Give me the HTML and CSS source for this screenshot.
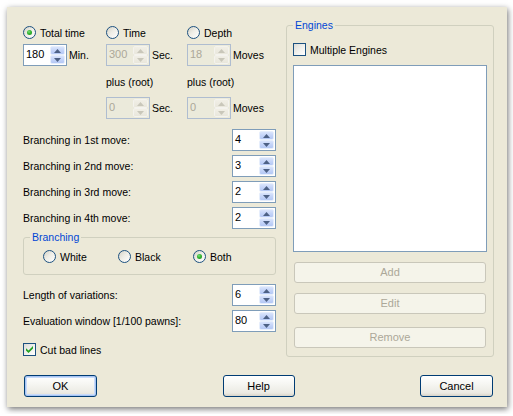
FILE: index.html
```html
<!DOCTYPE html>
<html>
<head>
<meta charset="utf-8">
<title>Options</title>
<link rel="stylesheet" href="styles.css">
</head>
<body>
<div class="window">
  <div class="main">
    <div class="left">
      <div class="trow r1">
        <div class="cell c1"><span class="radio checked"></span><span>Total time</span></div>
        <div class="cell c2"><span class="radio"></span><span>Time</span></div>
        <div class="cell c3"><span class="radio"></span><span>Depth</span></div>
      </div>
      <div class="trow r2">
        <div class="cell c1">
          <div class="spin"><span class="val">180</span><span class="btns"><i class="sb"><svg width="7" height="4" viewBox="0 0 7 4"><path d="M0 4L3.5 0L7 4Z"/></svg></i><i class="sb"><svg width="7" height="4" viewBox="0 0 7 4"><path d="M0 0L3.5 4L7 0Z"/></svg></i></span></div>
          <span class="unit">Min.</span>
        </div>
        <div class="cell c2">
          <div class="spin off"><span class="val">300</span><span class="btns"><i class="sb"><svg width="7" height="4" viewBox="0 0 7 4"><path d="M0 4L3.5 0L7 4Z"/></svg></i><i class="sb"><svg width="7" height="4" viewBox="0 0 7 4"><path d="M0 0L3.5 4L7 0Z"/></svg></i></span></div>
          <span class="unit">Sec.</span>
        </div>
        <div class="cell c3">
          <div class="spin off"><span class="val">18</span><span class="btns"><i class="sb"><svg width="7" height="4" viewBox="0 0 7 4"><path d="M0 4L3.5 0L7 4Z"/></svg></i><i class="sb"><svg width="7" height="4" viewBox="0 0 7 4"><path d="M0 0L3.5 4L7 0Z"/></svg></i></span></div>
          <span class="unit">Moves</span>
        </div>
      </div>
      <div class="trow r3">
        <div class="cell c1"></div>
        <div class="cell c2">plus (root)</div>
        <div class="cell c3">plus (root)</div>
      </div>
      <div class="trow r4">
        <div class="cell c1"></div>
        <div class="cell c2">
          <div class="spin off"><span class="val">0</span><span class="btns"><i class="sb"><svg width="7" height="4" viewBox="0 0 7 4"><path d="M0 4L3.5 0L7 4Z"/></svg></i><i class="sb"><svg width="7" height="4" viewBox="0 0 7 4"><path d="M0 0L3.5 4L7 0Z"/></svg></i></span></div>
          <span class="unit">Sec.</span>
        </div>
        <div class="cell c3">
          <div class="spin off"><span class="val">0</span><span class="btns"><i class="sb"><svg width="7" height="4" viewBox="0 0 7 4"><path d="M0 4L3.5 0L7 4Z"/></svg></i><i class="sb"><svg width="7" height="4" viewBox="0 0 7 4"><path d="M0 0L3.5 4L7 0Z"/></svg></i></span></div>
          <span class="unit">Moves</span>
        </div>
      </div>

      <div class="brow first">
        <span>Branching in 1st move:</span>
        <div class="spin"><span class="val">4</span><span class="btns"><i class="sb"><svg width="7" height="4" viewBox="0 0 7 4"><path d="M0 4L3.5 0L7 4Z"/></svg></i><i class="sb"><svg width="7" height="4" viewBox="0 0 7 4"><path d="M0 0L3.5 4L7 0Z"/></svg></i></span></div>
      </div>
      <div class="brow">
        <span>Branching in 2nd move:</span>
        <div class="spin"><span class="val">3</span><span class="btns"><i class="sb"><svg width="7" height="4" viewBox="0 0 7 4"><path d="M0 4L3.5 0L7 4Z"/></svg></i><i class="sb"><svg width="7" height="4" viewBox="0 0 7 4"><path d="M0 0L3.5 4L7 0Z"/></svg></i></span></div>
      </div>
      <div class="brow">
        <span>Branching in 3rd move:</span>
        <div class="spin"><span class="val">2</span><span class="btns"><i class="sb"><svg width="7" height="4" viewBox="0 0 7 4"><path d="M0 4L3.5 0L7 4Z"/></svg></i><i class="sb"><svg width="7" height="4" viewBox="0 0 7 4"><path d="M0 0L3.5 4L7 0Z"/></svg></i></span></div>
      </div>
      <div class="brow">
        <span>Branching in 4th move:</span>
        <div class="spin"><span class="val">2</span><span class="btns"><i class="sb"><svg width="7" height="4" viewBox="0 0 7 4"><path d="M0 4L3.5 0L7 4Z"/></svg></i><i class="sb"><svg width="7" height="4" viewBox="0 0 7 4"><path d="M0 0L3.5 4L7 0Z"/></svg></i></span></div>
      </div>

      <fieldset class="group branch">
        <legend>Branching</legend>
        <div class="bradios">
          <div class="ropt"><span class="radio"></span><span>White</span></div>
          <div class="ropt"><span class="radio"></span><span>Black</span></div>
          <div class="ropt"><span class="radio checked"></span><span>Both</span></div>
        </div>
      </fieldset>

      <div class="brow len">
        <span>Length of variations:</span>
        <div class="spin"><span class="val">6</span><span class="btns"><i class="sb"><svg width="7" height="4" viewBox="0 0 7 4"><path d="M0 4L3.5 0L7 4Z"/></svg></i><i class="sb"><svg width="7" height="4" viewBox="0 0 7 4"><path d="M0 0L3.5 4L7 0Z"/></svg></i></span></div>
      </div>
      <div class="brow">
        <span>Evaluation window [1/100 pawns]:</span>
        <div class="spin"><span class="val">80</span><span class="btns"><i class="sb"><svg width="7" height="4" viewBox="0 0 7 4"><path d="M0 4L3.5 0L7 4Z"/></svg></i><i class="sb"><svg width="7" height="4" viewBox="0 0 7 4"><path d="M0 0L3.5 4L7 0Z"/></svg></i></span></div>
      </div>

      <div class="crow cut">
        <span class="check"><svg width="7" height="7" viewBox="0 0 7 7"><path d="M0 2.2L2.5 4.6L7 0.1V2.6L2.5 7L0 4.6Z"/></svg></span>
        <span>Cut bad lines</span>
      </div>
    </div>

    <fieldset class="group engines">
      <legend>Engines</legend>
      <div class="crow multi">
        <span class="check empty"></span>
        <span>Multiple Engines</span>
      </div>
      <div class="list"></div>
      <div class="dbtn add">Add</div>
      <div class="dbtn edit">Edit</div>
      <div class="dbtn remove">Remove</div>
    </fieldset>
  </div>

  <div class="buttons">
    <div class="btn default">OK</div>
    <div class="btn help">Help</div>
    <div class="btn">Cancel</div>
  </div>
</div>
</body>
</html>
```

FILE: styles.css
```css
* { box-sizing: border-box; }
html, body { margin: 0; padding: 0; background: #ffffff; }
body {
  font-family: "Liberation Sans", Arial, sans-serif;
  font-size: 10.5px;
  color: #000000;
}

.window {
  margin: 7px;
  width: 500px;
  height: 400px;
  background: #ECE9D8;
  box-shadow: 1px 2px 6px rgba(0, 0, 0, 0.55);
  padding: 12px 13px 0 16px;
}

.main {
  display: flex;
  gap: 10px;
  height: 338px;
}

.left {
  width: 253px;
  display: flex;
  flex-direction: column;
}

/* time grid */
.trow { display: flex; }
.trow .cell { display: flex; align-items: center; white-space: nowrap; }
.c1 { width: 83px; }
.c2 { width: 81px; }
.c3 { flex: 1; }
.r1 { margin-top: 7px; height: 13px; }
.r2 { margin-top: 5px; height: 22px; }
.r3 { margin-top: 10px; height: 13px; line-height: 13px; }
.r4 { margin-top: 8px; height: 22px; }
.unit { margin-left: 2px; }

/* radio */
.radio {
  width: 13px;
  height: 13px;
  flex: none;
  border-radius: 50%;
  border: 1px solid #1C5180;
  background: linear-gradient(135deg, #D4D2C6 0%, #EEEDE6 45%, #FFFFFF 100%);
  margin-right: 4px;
  position: relative;
}
.radio.checked::after {
  content: "";
  position: absolute;
  left: 3px;
  top: 3px;
  width: 5px;
  height: 5px;
  border-radius: 50%;
  background: radial-gradient(circle at 40% 35%, #7BE07A 0%, #2FB32E 45%, #1E8E1E 100%);
}

/* spin box */
.spin {
  width: 44px;
  height: 22px;
  flex: none;
  display: flex;
  border: 1px solid #7F9DB9;
  background: #FFFFFF;
}
.spin .val {
  flex: 1;
  padding-left: 2px;
  line-height: 18px;
  font-size: 11px;
}
.spin .btns {
  width: 15px;
  margin: 1px 1px 1px 0;
  display: flex;
  flex-direction: column;
}
.sb {
  flex: 1;
  display: flex;
  align-items: center;
  justify-content: center;
  border-radius: 2px;
  border: 1px solid #E6EEFC;
  background: linear-gradient(180deg, #D9E4FC 0%, #C4D4F8 50%, #B4C8F5 100%);
}
.sb svg { display: block; fill: #4D6185; }
.spin.off { border-color: #AFBDD0; background: #EBEADB; }
.spin.off .val { color: #ACA899; }
.spin.off .sb {
  border-color: #F4F3EE;
  background: linear-gradient(180deg, #F1EFE6 0%, #E9E7DC 100%);
}
.spin.off .sb svg { fill: #C9C7BA; }

/* branching rows */
.brow {
  display: flex;
  justify-content: space-between;
  align-items: center;
  height: 22px;
  margin-top: 4px;
  white-space: nowrap;
}
.brow.first { margin-top: 10px; }
.brow.len { margin-top: 9px; }

/* group boxes */
.group {
  margin: 0;
  border: 1px solid #D0D0BF;
  border-radius: 3px;
  min-width: 0;
}
.group legend {
  padding: 0 2px;
  line-height: 13px;
  color: #0046D5;
}
.branch {
  margin-top: 2px;
  padding: 0 6px 11px;
}
.bradios {
  display: flex;
  margin-top: 6px;
  padding-left: 13px;
  height: 13px;
}
.ropt { width: 75px; display: flex; align-items: center; }

/* checkbox */
.crow { display: flex; align-items: center; height: 13px; white-space: nowrap; }
.cut { margin-top: 11px; }
.check {
  width: 13px;
  height: 13px;
  flex: none;
  border: 1px solid #1C5180;
  background: linear-gradient(135deg, #DCDCD7 0%, #F2F2EE 55%, #FFFFFF 100%);
  margin-right: 4px;
  display: flex;
  align-items: center;
  justify-content: center;
}
.check svg { display: block; fill: #21A121; }

/* engines */
.engines {
  width: 208px;
  flex: none;
  padding: 0 6px 8px;
}
.multi { margin-top: 11px; }
.list {
  margin-top: 9px;
  height: 187px;
  border: 1px solid #7F9DB9;
  background: #FFFFFF;
}
.dbtn {
  margin: 10px 1px 0;
  height: 21px;
  line-height: 19px;
  text-align: center;
  border: 1px solid #C9C7BA;
  border-radius: 3px;
  background: #F5F4EA;
  color: #ACA899;
  font-size: 11px;
}
.dbtn.remove { margin-top: 13px; }

/* bottom buttons */
.buttons {
  margin-top: 18px;
  padding: 0 1px 0 1px;
  display: flex;
  justify-content: space-between;
}
.btn {
  width: 73px;
  height: 22px;
  line-height: 20px;
  text-align: center;
  border: 1px solid #003C74;
  border-radius: 3px;
  background: linear-gradient(180deg, #FFFFFF 0%, #F6F6F2 40%, #EBEAE3 85%, #D8D3C8 100%);
  font-size: 11px;
}
.btn.help { width: 72px; }
.btn.default {
  box-shadow: inset 0 0 0 1px #A6C4F2, inset 0 0 0 2px #C9DBFA;
}
```
